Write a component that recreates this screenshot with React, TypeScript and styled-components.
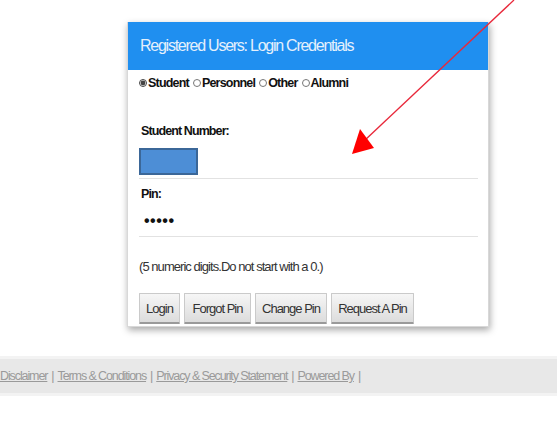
import React, { FC } from 'react';
import styled, { createGlobalStyle } from 'styled-components';

// ---------------- global ---------------------
const GlobalStyle = createGlobalStyle`
    html, body {
        margin: 0;
        padding: 0;
        background: #ffffff;
        font-family: "Liberation Sans", Arial, sans-serif;
    }
`;

const Page = styled.div`
    position: relative;
    width: 557px;
    height: 428px;
    overflow: hidden;
    padding-top: 22px;
    box-sizing: border-box;
`;

// ---------------- card ---------------------
const Card = styled.section`
    margin-left: 127px;
    width: 362px;
    background: #fff;
    border: 1px solid #d8d8d8;
    border-top: none;
    box-sizing: border-box;
    box-shadow: 1px 3px 7px rgba(0, 0, 0, 0.35);
`;

const Header = styled.h2`
    margin: 0;
    height: 48px;
    display: flex;
    align-items: center;
    padding-left: 12px;
    background: #1f8ff0;
    color: #e4f0fc;
    font-weight: normal;
    font-size: 16px;
    letter-spacing: -1.25px;
`;

const Body = styled.div`
    padding: 0 10px 2px 10px;
`;

const RadioRow = styled.div`
    display: flex;
    align-items: center;
    height: 22px;
    margin-top: 2px;
    font-size: 12.5px;
    font-weight: bold;
    letter-spacing: -0.8px;
    color: #111;
`;

const RadioLabel = styled.label`
    display: flex;
    align-items: center;
    margin-right: 3px;
`;

const Radio = styled.input`
    width: 8px;
    height: 8px;
    margin: 0 1px 0 1px;
    accent-color: #444;
`;

const FieldLabel = styled.div<{ $top: number }>`
    margin-top: ${(p) => p.$top}px;
    padding-left: 3px;
    font-size: 12.5px;
    font-weight: bold;
    letter-spacing: -0.9px;
    color: #111;
    line-height: 14px;
`;

const FieldRow = styled.div<{ $height: number; $pad: number }>`
    display: flex;
    align-items: flex-start;
    height: ${(p) => p.$height}px;
    padding-top: ${(p) => p.$pad}px;
    box-sizing: border-box;
    margin-left: 1px;
    border-bottom: 1px solid #e2e2e2;
`;

const NumberInput = styled.input`
    width: 59px;
    height: 27px;
    box-sizing: border-box;
    margin: 0;
    border: 2px solid #3b6798;
    background: #4d8ed6;
`;

const PinInput = styled.input`
    border: none;
    outline: none;
    padding: 0 0 0 5px;
    width: 120px;
    font-size: 16px;
    font-weight: bold;
    letter-spacing: 0.5px;
    color: #111;
    background: transparent;
`;

const Hint = styled.p`
    margin: 22px 0 0 1px;
    font-size: 13px;
    letter-spacing: -0.95px;
    color: #333;
    line-height: 16px;
`;

const Buttons = styled.div`
    display: flex;
    gap: 4px;
    margin-top: 18px;
    padding-left: 1px;
`;

const Button = styled.button<{ $width: number }>`
    width: ${(p) => p.$width}px;
    height: 31px;
    padding: 0;
    font-family: "Liberation Sans", Arial, sans-serif;
    font-size: 13px;
    letter-spacing: -1px;
    color: #333;
    background: linear-gradient(#f6f6f6, #dcdcdc);
    border: 1px solid #cacaca;
    border-bottom: 2px solid #9a9a9a;
    border-radius: 1px;
    cursor: pointer;
`;

// ---------------- footer ---------------------
const Footer = styled.footer`
    margin-top: 29px;
    height: 40px;
    display: flex;
    align-items: center;
    background: #e8e8e8;
    border-top: 3px solid #f3f3f3;
    border-bottom: 3px solid #f3f3f3;
    box-sizing: border-box;
    font-size: 12.5px;
    letter-spacing: -1.1px;
    color: #999;
`;

const FooterLink = styled.a`
    color: #9a9a9a;
    text-decoration: underline;
`;

const Sep = styled.span`
    margin: 0 4px;
`;

// annotation laid over the screenshot
const Arrow = styled.svg`
    position: absolute;
    left: 0;
    top: 0;
    pointer-events: none;
`;

const links = ['Disclaimer', 'Terms & Conditions', 'Privacy & Security Statement', 'Powered By'];
const roles = ['Student', 'Personnel', 'Other', 'Alumni'];
const actions: [string, number][] = [
    ['Login', 41],
    ['Forgot Pin', 67],
    ['Change Pin', 72],
    ['Request A Pin', 83],
];

const App: FC = () => {
    return (
        <Page>
            <GlobalStyle />
            <Card>
                <Header>Registered Users: Login Credentials</Header>
                <Body>
                    <RadioRow>
                        {roles.map((r, i) => (
                            <RadioLabel key={r}>
                                <Radio type="radio" name="role" defaultChecked={i === 0} />
                                {r}
                            </RadioLabel>
                        ))}
                    </RadioRow>
                    <FieldLabel $top={30}>Student Number:</FieldLabel>
                    <FieldRow $height={41} $pad={10}>
                        <NumberInput type="text" />
                    </FieldRow>
                    <FieldLabel $top={8}>Pin:</FieldLabel>
                    <FieldRow $height={36} $pad={11}>
                        <PinInput type="password" defaultValue="12345" readOnly />
                    </FieldRow>
                    <Hint>(5 numeric digits.Do not start with a 0.)</Hint>
                    <Buttons>
                        {actions.map(([label, w]) => (
                            <Button key={label} $width={w}>{label}</Button>
                        ))}
                    </Buttons>
                </Body>
            </Card>
            <Footer>
                {links.map((l) => (
                    <React.Fragment key={l}>
                        <FooterLink href="#">{l}</FooterLink>
                        <Sep>|</Sep>
                    </React.Fragment>
                ))}
            </Footer>
            <Arrow width="557" height="428" viewBox="0 0 557 428">
                <line x1="514" y1="0" x2="364" y2="141" stroke="#e8283a" strokeWidth="1.3" />
                <polygon points="352,154 360,129 374,148" fill="#ff0000" />
            </Arrow>
        </Page>
    );
};

export default App;
